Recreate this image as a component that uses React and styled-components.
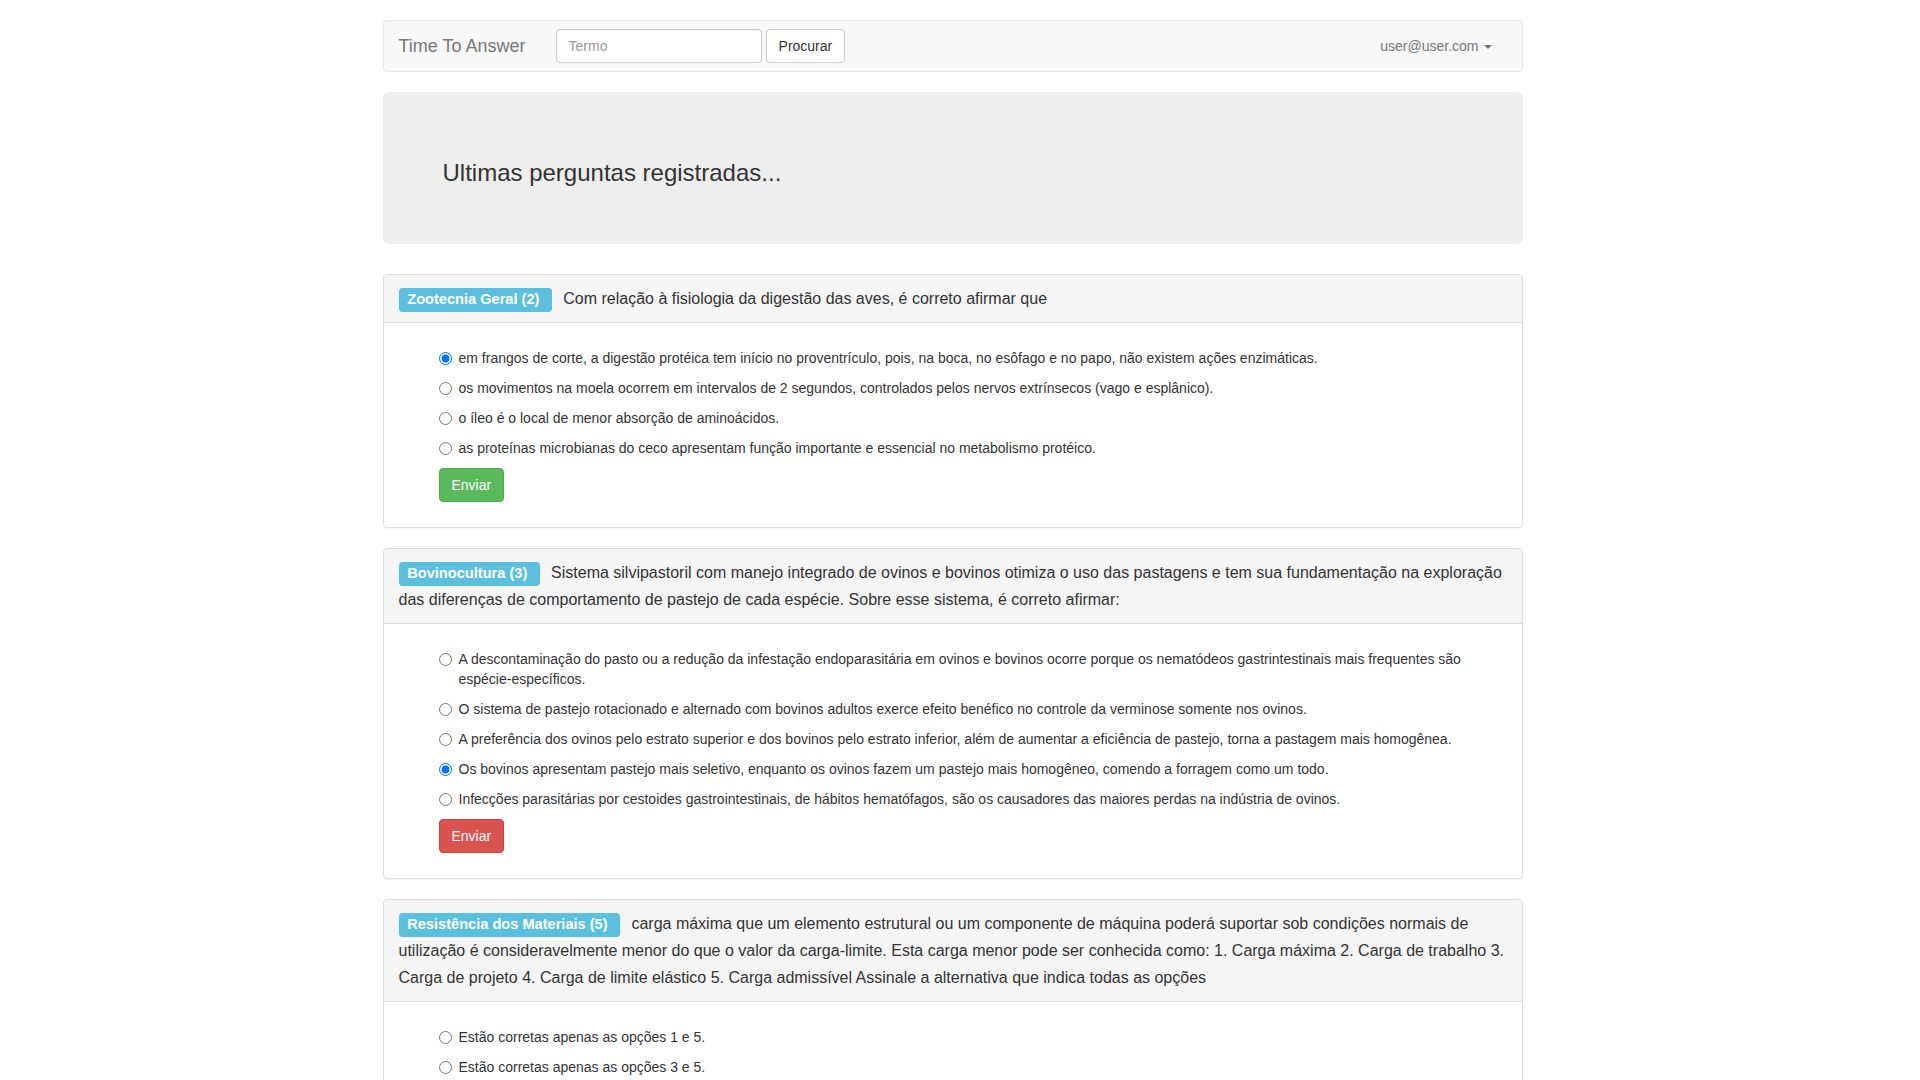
import styled, { createGlobalStyle } from "styled-components";

const GlobalStyle = createGlobalStyle`
  body {
    margin: 0;
    padding-right: 15px;
    font-family: "Liberation Sans", Arial, sans-serif;
    font-size: 14px;
    line-height: 1.42857143;
    color: #333;
    background-color: #fff;
  }

  * {
    box-sizing: border-box;
  }
`;

const questions = [
  {
    id: 1,
    category: "Zootecnia Geral (2)",
    text: "Com relação à fisiologia da digestão das aves, é correto afirmar que",
    options: [
      "em frangos de corte, a digestão protéica tem início no proventrículo, pois, na boca, no esôfago e no papo, não existem ações enzimáticas.",
      "os movimentos na moela ocorrem em intervalos de 2 segundos, controlados pelos nervos extrínsecos (vago e esplânico).",
      "o íleo é o local de menor absorção de aminoácidos.",
      "as proteínas microbianas do ceco apresentam função importante e essencial no metabolismo protéico.",
    ],
    checked: 0,
    status: "success",
  },
  {
    id: 2,
    category: "Bovinocultura (3)",
    text: "Sistema silvipastoril com manejo integrado de ovinos e bovinos otimiza o uso das pastagens e tem sua fundamentação na exploração das diferenças de comportamento de pastejo de cada espécie. Sobre esse sistema, é correto afirmar:",
    options: [
      "A descontaminação do pasto ou a redução da infestação endoparasitária em ovinos e bovinos ocorre porque os nematódeos gastrintestinais mais frequentes são espécie-específicos.",
      "O sistema de pastejo rotacionado e alternado com bovinos adultos exerce efeito benéfico no controle da verminose somente nos ovinos.",
      "A preferência dos ovinos pelo estrato superior e dos bovinos pelo estrato inferior, além de aumentar a eficiência de pastejo, torna a pastagem mais homogênea.",
      "Os bovinos apresentam pastejo mais seletivo, enquanto os ovinos fazem um pastejo mais homogêneo, comendo a forragem como um todo.",
      "Infecções parasitárias por cestoides gastrointestinais, de hábitos hematófagos, são os causadores das maiores perdas na indústria de ovinos.",
    ],
    checked: 3,
    status: "danger",
  },
  {
    id: 3,
    category: "Resistência dos Materiais (5)",
    text: "carga máxima que um elemento estrutural ou um componente de máquina poderá suportar sob condições normais de utilização é consideravelmente menor do que o valor da carga-limite. Esta carga menor pode ser conhecida como: 1. Carga máxima 2. Carga de trabalho 3. Carga de projeto 4. Carga de limite elástico 5. Carga admissível Assinale a alternativa que indica todas as opções",
    options: [
      "Estão corretas apenas as opções 1 e 5.",
      "Estão corretas apenas as opções 3 e 5.",
      "Estão corretas apenas as opções 2 e 5.",
      "Estão corretas apenas as opções 2, 3 e 5.",
      "Estão corretas apenas as opções 1, 2 e 4.",
    ],
    checked: -1,
    status: "primary",
  },
];

const buttonColors = {
  success: { bg: "#5cb85c", border: "#4cae4c", color: "#fff" },
  danger: { bg: "#d9534f", border: "#d43f3a", color: "#fff" },
  primary: { bg: "#337ab7", border: "#2e6da4", color: "#fff" },
  default: { bg: "#fff", border: "#ccc", color: "#333" },
};

const Container = styled.div`
  width: 1170px;
  margin: 0 auto;
  padding: 20px 15px 0;
`;

const Navbar = styled.nav`
  display: flex;
  align-items: center;
  height: 52px;
  margin-bottom: 20px;
  padding-right: 15px;
  background-color: #f8f8f8;
  border: 1px solid #e7e7e7;
  border-radius: 4px;
`;

const Brand = styled.a`
  padding: 15px;
  font-size: 18px;
  line-height: 20px;
  color: #777;
  text-decoration: none;
`;

const SearchForm = styled.form`
  display: flex;
  align-items: center;
  gap: 4px;
  margin: 0;
  padding: 0 15px;
`;

const SearchInput = styled.input`
  width: 206px;
  height: 34px;
  padding: 6px 12px;
  font-family: inherit;
  font-size: 14px;
  line-height: 1.42857143;
  color: #555;
  background-color: #fff;
  border: 1px solid #ccc;
  border-radius: 4px;
  box-shadow: inset 0 1px 1px rgba(0, 0, 0, 0.075);
  outline: none;

  &::placeholder {
    color: #999;
  }
`;

const Button = styled.button`
  display: block;
  height: 34px;
  padding: 6px 12px;
  font-family: inherit;
  font-size: 14px;
  line-height: 1.42857143;
  white-space: nowrap;
  cursor: pointer;
  color: ${(p) => buttonColors[p.$variant].color};
  background-color: ${(p) => buttonColors[p.$variant].bg};
  border: 1px solid ${(p) => buttonColors[p.$variant].border};
  border-radius: 4px;
`;

const SubmitButton = styled(Button)`
  margin-left: 40px;
`;

const NavRight = styled.a`
  margin-left: auto;
  padding: 15px;
  line-height: 20px;
  color: #777;
  text-decoration: none;
`;

const Caret = styled.span`
  display: inline-block;
  width: 0;
  height: 0;
  margin-left: 5px;
  vertical-align: middle;
  border-top: 4px solid #777;
  border-left: 4px solid transparent;
  border-right: 4px solid transparent;
`;

const Jumbotron = styled.div`
  margin-bottom: 30px;
  padding: 48px 60px;
  background-color: #eee;
  border-radius: 6px;

  h3 {
    margin: 20px 0 10px;
    font-size: 24px;
    font-weight: 500;
    line-height: 1.1;
  }
`;

const Panel = styled.div`
  margin-bottom: 20px;
  background-color: #fff;
  border: 1px solid #ddd;
  border-radius: 4px;
  box-shadow: 0 1px 1px rgba(0, 0, 0, 0.05);
`;

const PanelHeading = styled.div`
  padding: 10px 15px;
  font-size: 16px;
  line-height: 27px;
  color: #333;
  background-color: #f5f5f5;
  border-bottom: 1px solid #ddd;
  border-radius: 3px 3px 0 0;
`;

const Label = styled.span`
  margin-right: 11px;
  padding: 0.2em 0.6em 0.3em;
  font-size: 14.6px;
  font-weight: bold;
  line-height: 1;
  color: #fff;
  white-space: nowrap;
  background-color: #5bc0de;
  border-radius: 0.25em;
`;

const PanelBody = styled.div`
  padding: 15px;
`;

const AnswerForm = styled.form`
  display: flex;
  flex-direction: column;
  align-items: flex-start;
  margin: 0 0 10px;
`;

const OptionList = styled.ul`
  align-self: stretch;
  margin: 10px 0;
  padding: 0 0 0 40px;
  list-style: none;
`;

const Option = styled.li`
  position: relative;
  margin: 10px 0;

  &:first-child {
    margin-top: 0;
  }

  &:last-child {
    margin-bottom: 0;
  }

  label {
    display: block;
    min-height: 20px;
    padding-left: 20px;
    line-height: 20px;
    cursor: pointer;
  }

  input {
    position: absolute;
    left: 0;
    top: 0;
    width: 13px;
    height: 13px;
    margin: 4px 0 0;
  }
`;

function QuestionPanel({ question }) {
  return (
    <Panel>
      <PanelHeading>
        <Label>{question.category + "\u00a0"}</Label>
        {question.text}
      </PanelHeading>
      <PanelBody>
        <AnswerForm onSubmit={(e) => e.preventDefault()}>
          <OptionList>
            {question.options.map((option, i) => (
              <Option key={i}>
                <label>
                  <input
                    type="radio"
                    name={"question-" + question.id}
                    defaultChecked={i === question.checked}
                  />
                  {option}
                </label>
              </Option>
            ))}
          </OptionList>
          <SubmitButton type="submit" $variant={question.status}>
            Enviar
          </SubmitButton>
        </AnswerForm>
      </PanelBody>
    </Panel>
  );
}

export default function App() {
  return (
    <>
      <GlobalStyle />
      <Container>
        <Navbar>
          <Brand href="#">Time To Answer</Brand>
          <SearchForm onSubmit={(e) => e.preventDefault()}>
            <SearchInput type="text" placeholder="Termo" />
            <Button type="submit" $variant="default">
              Procurar
            </Button>
          </SearchForm>
          <NavRight href="#">
            user@user.com
            <Caret />
          </NavRight>
        </Navbar>

        <Jumbotron>
          <h3>Ultimas perguntas registradas...</h3>
        </Jumbotron>

        {questions.map((q) => (
          <QuestionPanel key={q.id} question={q} />
        ))}
      </Container>
    </>
  );
}
